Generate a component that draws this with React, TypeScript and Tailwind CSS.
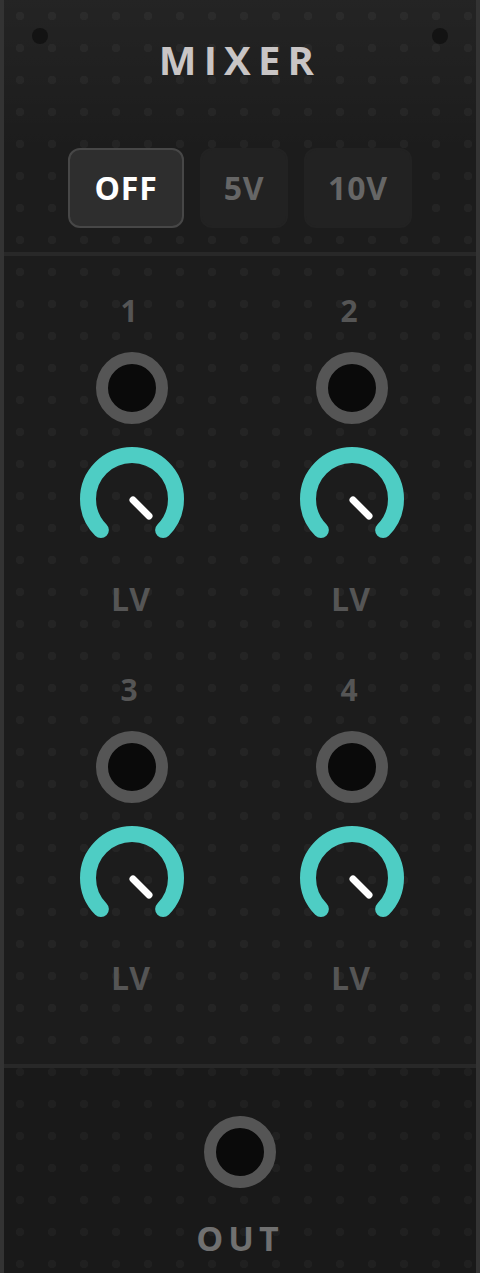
import React from 'react';

const modes = [
  { label: 'OFF', width: 'w-[116px]', active: true },
  { label: '5V', width: 'w-[88px]', active: false },
  { label: '10V', width: 'w-[108px]', active: false },
];

function Jack() {
  return (
    <div className="w-[72px] h-[72px] rounded-full bg-[#0a0a0a] border-[12px] border-[#555555]" />
  );
}

function Knob() {
  return (
    <svg width="110" height="110" viewBox="0 0 110 110">
      <path
        d="M 23.89 86.11 A 44 44 0 1 1 86.11 86.11"
        fill="none"
        stroke="#4ecdc4"
        strokeWidth="16"
        strokeLinecap="round"
      />
      <line x1="56" y1="56" x2="72" y2="72" stroke="#ffffff" strokeWidth="7" strokeLinecap="round" />
    </svg>
  );
}

function Channel({ n }: { n: number }) {
  return (
    <div className="flex flex-col items-center">
      <div className="text-[30px] leading-[36px] font-bold tracking-[0.2em] text-[#555555]">{n}</div>
      <div className="mt-[23px]">
        <Jack />
      </div>
      <div className="mt-[20px]">
        <Knob />
      </div>
      <div className="mt-[25px] pr-[3px] text-[32px] leading-[40px] font-bold text-[#555555]">LV</div>
    </div>
  );
}

export default function App() {
  return (
    <div className="w-[480px] h-[1273px] flex flex-col border-x-4 border-[#333333] bg-[#1c1c1c] bg-[radial-gradient(circle,#242424_4px,transparent_4.5px)] bg-[length:32px_32px] font-['Open_Sans',sans-serif]">
      {/* header */}
      <div className="relative h-[256px] shrink-0 border-b-4 border-[#282828] bg-linear-to-b from-white/[0.035] to-transparent to-60%">
        <div className="absolute left-[28px] top-[28px] w-4 h-4 rounded-full bg-[#131313]" />
        <div className="absolute right-[28px] top-[28px] w-4 h-4 rounded-full bg-[#131313]" />
        <h1 className="pt-[36px] text-center text-[40px] leading-[48px] font-bold tracking-[0.18em] text-[#c9c5c5]">
          MIXER
        </h1>
        <div className="mt-[64px] flex justify-center gap-4">
          {modes.map((m) => (
            <button
              key={m.label}
              className={`${m.width} h-[80px] rounded-xl border-2 text-[32px] font-bold tracking-wide ${
                m.active
                  ? 'bg-[#2e2e2e] border-[#474747] text-white'
                  : 'bg-[#222222] border-[#222222] text-[#666666]'
              }`}
            >
              {m.label}
            </button>
          ))}
        </div>
      </div>

      {/* channels */}
      <div className="h-[812px] shrink-0 border-b-4 border-[#282828] pt-[37px] pl-[18px]">
        <div className="grid grid-cols-[220px_220px] gap-y-[53px]">
          {[1, 2, 3, 4].map((n) => (
            <Channel key={n} n={n} />
          ))}
        </div>
      </div>

      {/* output */}
      <div className="flex-1 flex flex-col items-center bg-black/10 pt-[48px]">
        <Jack />
        <div className="mt-[30px] text-[34px] leading-[40px] font-bold tracking-[0.15em] text-[#707070]">OUT</div>
      </div>
    </div>
  );
}
